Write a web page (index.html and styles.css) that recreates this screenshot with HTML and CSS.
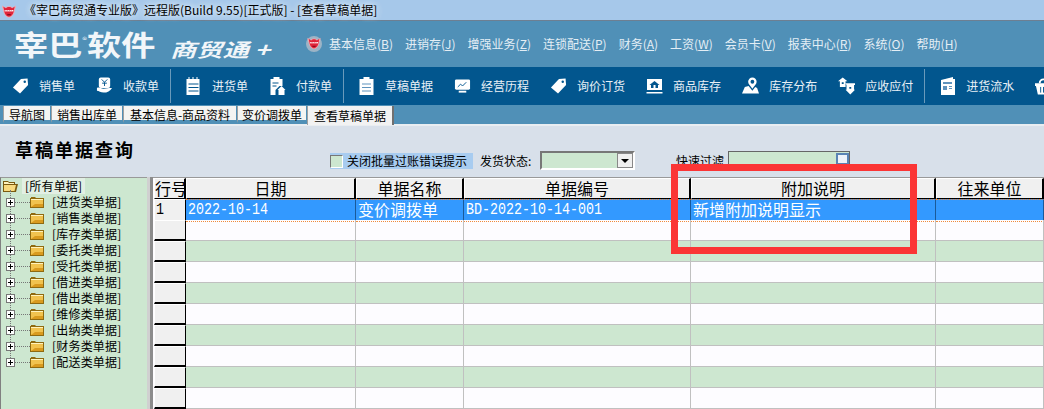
FILE: index.html
```html
<!DOCTYPE html>
<html lang="zh-CN">
<head>
<meta charset="utf-8">
<title>查看草稿单据</title>
<link rel="stylesheet" href="styles.css">
</head>
<body>
<svg class="defs" width="0" height="0" aria-hidden="true">
  <symbol id="bull" viewBox="0 0 16 16">
    <path fill="#f2a6ae" d="M0 2c1 1 2 2 4 2.500C5 3.500 6.500 3 8 3s3 .5 4 1.500C14 4 15 3 16 2c0 3-1 5-1.500 6.500C14 12 11 16 8 16s-6-4-6.500-7.500C1 7 0 5 0 2z"/>
    <path fill="#e0243a" d="M1.500 3.500C2.500 4.500 3.500 5 4.500 5.500 5.500 4.500 6.500 4 8 4s2.500.5 3.500 1.500c1-.5 2-1 3-2-.2 2-.8 3.500-1 5C13 12 10.500 15 8 15s-5-3-5.500-6.500c-.2-1.500-.8-3-1-5z"/>
    <path fill="#fff" d="M3 7.500h10v1.500H3z"/><path fill="#e0243a" d="M4 8h1v.6H4zM6 8h1v.6H6zM8 8h1v.6H8zM10 8h1v.6h-1z"/>
    <path fill="#8c1020" d="M6 12h4v1.500H6z"/>
  </symbol>
  <symbol id="tag" viewBox="0 0 18 18">
    <path fill="#fff" d="M9.500 1.500L16.500 1l.500 7-8.500 9L1 10.500z"/><circle cx="13.500" cy="4.500" r="1.300" fill="#02568e"/>
  </symbol>
  <symbol id="hand" viewBox="0 0 18 18">
    <rect x="3" y="0" width="12" height="11" rx="2" fill="#fff"/><path d="M6 2l3 3 3-3M9 5v4M6.500 6h5" stroke="#02568e" fill="none"/>
    <path fill="#fff" d="M1 11c3-1 4 1 7 1l6-1c1 0 2 0 3 0-2 3-5 5-9 5-3 0-5-2-7-2z"/>
  </symbol>
  <symbol id="list" viewBox="0 0 16 18">
    <path fill="#fff" d="M1 2h2V0h1v2h3V0h1v2h3V0h1v2h2v16H1z"/><path stroke="#02568e" d="M3 7h10M3 10.500h10M3 14h10"/>
  </symbol>
  <symbol id="pay" viewBox="0 0 16 18">
    <path fill="#fff" d="M1 2h3V0h6v2h3v7h-3l-4 4v5H1z"/><path stroke="#02568e" d="M3 6h6M3 9h4"/><path fill="#fff" d="M12 9l4 4h-1v5H9v-5H8z"/>
  </symbol>
  <symbol id="clip" viewBox="0 0 16 18">
    <path fill="#fff" d="M1 2h4V0h6v2h4v16H1z"/><path stroke="#5f93bd" d="M3.500 7h9M3.500 10.500h9M3.500 14h9"/>
  </symbol>
  <symbol id="chart" viewBox="0 0 18 18">
    <rect x="1" y="2" width="16" height="11" rx="1.500" fill="#fff"/><path d="M4 10l3-3 2 2 4-4" stroke="#02568e" fill="none"/><path fill="#fff" d="M5 14h8v2H5z"/>
  </symbol>
  <symbol id="store" viewBox="0 0 16 18">
    <rect x="0.500" y="2" width="15" height="11" fill="#fff"/><path fill="#02568e" d="M8 4l5 4h-1.500v3h-7V8H3z"/><path fill="#fff" d="M7 8h2v3H7z"/><path fill="#fff" d="M0 15h16v1.500H0z"/>
  </symbol>
  <symbol id="map" viewBox="0 0 18 18">
    <path fill="#fff" d="M11 0a4.500 4.500 0 0 1 4.500 4.500C15.500 7 13 9 11 12 9 9 6.500 7 6.500 4.500A4.500 4.500 0 0 1 11 0z"/><circle cx="11" cy="4.500" r="2" fill="#02568e"/><path fill="#fff" d="M3 10l4-1 4 5 3-4 2 1 2 6H0z"/>
  </symbol>
  <symbol id="swap" viewBox="0 0 18 18">
    <path fill="#fff" d="M5 0l5 4H8v6H2V4H0zM8 6h10v2h-1v5h1l-5 5-5-5h1V8z"/><path fill="#02568e" d="M4 5h2v2H4zM12 10h2v2h-2z"/>
  </symbol>
  <symbol id="flow" viewBox="0 0 15 18">
    <path fill="#fff" d="M1 3l12-3v2h2v16H1z"/><path fill="#5f93bd" d="M3 5h9v2H3zM3 9h4v4H3zM9 9h3v1H9zM9 11h3v1H9z"/>
  </symbol>
  <symbol id="cart" viewBox="0 0 18 18">
    <path d="M5 6a4 4 0 0 1 8 0" stroke="#fff" stroke-width="2" fill="none"/><path fill="#fff" d="M0 6h18v3h-1l-2 9H3L1 9H0z"/><path stroke="#02568e" d="M6 10v6M9 10v6M12 10v6"/>
  </symbol>
  <symbol id="folder" viewBox="0 0 14 12">
    <path fill="#8f6a10" d="M0 2h1V1h4l1 1h8v10H0z"/><path fill="#fff3bd" d="M1 3h12v1H1z"/><path fill="#f1c34f" d="M1 4h12v7H1z"/><path fill="#d99b1f" d="M5 8h8v3H1z"/>
  </symbol>
  <symbol id="folder-open" viewBox="0 0 15 12">
    <path fill="#7a5a10" d="M0 1h5l1 1h6v2h3l-2 8H0z"/><path fill="#f8da7e" d="M1 5h12l-1.500 6H1z"/><path fill="#fff3bd" d="M1 2h4l1 1h5v1H1z"/>
  </symbol>
</svg>

<header class="titlebar">
  <svg class="title-icon"><use href="#bull"/></svg>
  <span class="title-text">《宰巴商贸通专业版》远程版(Build 9.55)[正式版] - [查看草稿单据]</span>
</header>

<section class="brandbar">
  <div class="logo"><span class="logo-main">宰巴<sup>®</sup>软件</span><span class="logo-sub">商贸通 +</span></div>
  <span class="menu-badge"><svg class="menu-icon"><use href="#bull"/></svg></span>
  <nav class="menu">
    <span>基本信息(<u>B</u>)</span><span>进销存(<u>J</u>)</span><span>增强业务(<u>Z</u>)</span><span>连锁配送(<u>P</u>)</span><span>财务(<u>A</u>)</span><span>工资(<u>W</u>)</span><span>会员卡(<u>V</u>)</span><span>报表中心(<u>R</u>)</span><span>系统(<u>O</u>)</span><span>帮助(<u>H</u>)</span>
  </nav>
</section>

<nav class="toolbar">
  <div class="tool"><svg class="ti"><use href="#tag"/></svg><span>销售单</span></div>
  <div class="tool"><svg class="ti"><use href="#hand"/></svg><span>收款单</span></div>
  <i class="sep"></i>
  <div class="tool"><svg class="ti"><use href="#list"/></svg><span>进货单</span></div>
  <div class="tool"><svg class="ti"><use href="#pay"/></svg><span>付款单</span></div>
  <i class="sep"></i>
  <div class="tool"><svg class="ti"><use href="#clip"/></svg><span>草稿单据</span></div>
  <div class="tool"><svg class="ti"><use href="#chart"/></svg><span>经营历程</span></div>
  <div class="tool"><svg class="ti"><use href="#tag"/></svg><span>询价订货</span></div>
  <div class="tool"><svg class="ti"><use href="#store"/></svg><span>商品库存</span></div>
  <div class="tool"><svg class="ti"><use href="#map"/></svg><span>库存分布</span></div>
  <div class="tool"><svg class="ti"><use href="#swap"/></svg><span>应收应付</span></div>
  <i class="sep"></i>
  <div class="tool"><svg class="ti"><use href="#flow"/></svg><span>进货流水</span></div>
  <div class="tool"><svg class="ti"><use href="#cart"/></svg></div>
</nav>

<div class="tabs">
  <span class="tab w1">导航图</span><span class="tab w2">销售出库单</span><span class="tab w3">基本信息-商品资料</span><span class="tab w4">变价调拨单</span><span class="tab active">查看草稿单据</span>
</div>

<main class="page">
  <div class="query">
    <h1>草稿单据查询</h1>
    <label class="check"><i class="box"></i>关闭批量过账错误提示</label>
    <span class="lbl">发货状态:</span>
    <span class="select"><b class="drop"></b></span>
    <span class="lbl lbl-filter">快速过滤</span>
    <span class="filter"><b class="filter-btn"></b></span>
  </div>
  <div class="body">
    <aside class="tree">
      <div class="node root"><svg class="fo"><use href="#folder-open"/></svg><span class="root-label">[所有单据]</span></div>
      <div class="node"><i class="plus"></i><i class="dots"></i><svg class="fc"><use href="#folder"/></svg><span>[进货类单据]</span></div>
      <div class="node"><i class="plus"></i><i class="dots"></i><svg class="fc"><use href="#folder"/></svg><span>[销售类单据]</span></div>
      <div class="node"><i class="plus"></i><i class="dots"></i><svg class="fc"><use href="#folder"/></svg><span>[库存类单据]</span></div>
      <div class="node"><i class="plus"></i><i class="dots"></i><svg class="fc"><use href="#folder"/></svg><span>[委托类单据]</span></div>
      <div class="node"><i class="plus"></i><i class="dots"></i><svg class="fc"><use href="#folder"/></svg><span>[受托类单据]</span></div>
      <div class="node"><i class="plus"></i><i class="dots"></i><svg class="fc"><use href="#folder"/></svg><span>[借进类单据]</span></div>
      <div class="node"><i class="plus"></i><i class="dots"></i><svg class="fc"><use href="#folder"/></svg><span>[借出类单据]</span></div>
      <div class="node"><i class="plus"></i><i class="dots"></i><svg class="fc"><use href="#folder"/></svg><span>[维修类单据]</span></div>
      <div class="node"><i class="plus"></i><i class="dots"></i><svg class="fc"><use href="#folder"/></svg><span>[出纳类单据]</span></div>
      <div class="node"><i class="plus"></i><i class="dots"></i><svg class="fc"><use href="#folder"/></svg><span>[财务类单据]</span></div>
      <div class="node"><i class="plus"></i><i class="dots"></i><svg class="fc"><use href="#folder"/></svg><span>[配送类单据]</span></div>
    </aside>
    <div class="splitter"></div>
    <section class="grid">
      <div class="row head"><div>行号</div><div>日期</div><div>单据名称</div><div>单据编号</div><div>附加说明</div><div>往来单位</div></div>
      <div class="row sel"><div class="num"><span>1</span></div><div class="num"><span>2022-10-14</span></div><div>变价调拨单</div><div class="num"><span>BD-2022-10-14-001</span></div><div>新增附加说明显示</div><div></div></div>
      <div class="row"><div></div><div></div><div></div><div></div><div></div><div></div></div>
      <div class="row alt"><div></div><div></div><div></div><div></div><div></div><div></div></div>
      <div class="row"><div></div><div></div><div></div><div></div><div></div><div></div></div>
      <div class="row alt"><div></div><div></div><div></div><div></div><div></div><div></div></div>
      <div class="row"><div></div><div></div><div></div><div></div><div></div><div></div></div>
      <div class="row alt"><div></div><div></div><div></div><div></div><div></div><div></div></div>
      <div class="row"><div></div><div></div><div></div><div></div><div></div><div></div></div>
      <div class="row alt"><div></div><div></div><div></div><div></div><div></div><div></div></div>
      <div class="row"><div></div><div></div><div></div><div></div><div></div><div></div></div>
    </section>
  </div>
  <div class="annotation"></div>
</main>
</body>
</html>
```

FILE: styles.css
```css
* { box-sizing: border-box; }
html, body { margin: 0; height: 409px; overflow: hidden; }
body { width: 1044px; font: 12px/16px "Noto Sans CJK SC", "Noto Sans", sans-serif; color: #000; background: #d8e0ea; }
.defs { position: absolute; }
u { text-decoration: underline; }
i, b { display: block; }

.titlebar { height: 21px; display: flex; align-items: center; background: #a6c8ea; border-bottom: 1px solid #6d7f92; padding-left: 2px; }
.title-icon { width: 14px; height: 15px; }
.title-text { margin-left: 8px; white-space: nowrap; text-shadow: 0 0 6px #e6f0fa, 0 0 6px #e6f0fa; }

.brandbar { height: 46px; display: flex; align-items: center; background: #5090b7; color: #e4eef5; padding-left: 14px; }
.logo { width: 292px; display: flex; align-items: center; color: #f2f6f9; white-space: nowrap; }
.logo-main { font-size: 28px; line-height: 36px; font-weight: 700; width: 156px; flex: none; display: block; transform: scaleX(1.22); transform-origin: left center; }
.logo-main sup { font-size: 8px; font-weight: 400; line-height: 0; vertical-align: 13px; }
.logo-sub { font-size: 19px; line-height: 24px; font-style: italic; font-weight: 700; margin-top: 9px; flex: none; transform: scaleX(1.38); transform-origin: left center; }
.menu-badge { width: 16px; height: 16px; border-radius: 50%; background: #9cb4c6; display: flex; align-items: flex-start; justify-content: center; margin-right: 7px; }
.menu-icon { width: 14px; height: 13px; }
.menu { display: flex; gap: 12px; white-space: nowrap; }

.toolbar { height: 38px; display: flex; align-items: center; gap: 21px; background: #02568e; color: #e8f0f6; padding-left: 12px; overflow: hidden; white-space: nowrap; }
.tool { display: flex; align-items: center; gap: 10px; }
.ti { width: 17px; height: 18px; flex: none; }
.sep { width: 1px; height: 34px; background: #6a9abb; margin: 0 -7px 0 -10px; flex: none; }

.tabs { height: 21px; display: flex; align-items: flex-end; gap: 1px; background: #5090b7; padding: 0 0 1px 3px; border-bottom: 2px solid #e9edf1; }
.tab { height: 17px; line-height: 18px; text-align: center; background: #f4f4f2; border-bottom: 3px solid #5090b7; border-left: 1px solid #a0a0a0; white-space: nowrap; }
.w1 { width: 47px; }
.w2 { width: 71px; }
.w3 { width: 113px; }
.w4 { width: 69px; }
.active { width: 87px; height: 19px; line-height: 19px; background: #f2f2f2; margin-bottom: -2px; border-bottom: 0; border-right: 2px solid #707070; }

.page { position: relative; height: 284px; }
.query { height: 51px; display: flex; align-items: flex-start; position: relative; }
h1 { margin: 12px 0 0 15px; width: 315px; font-size: 18px; line-height: 22px; letter-spacing: 2px; font-weight: 700; }
.check { width: 143px; height: 16px; margin-top: 27px; display: flex; align-items: center; gap: 4px; background: #a8ccf0; white-space: nowrap; }
.box { width: 13px; height: 13px; background: #cde7d0; border: 1px solid; border-color: #777 #fff #fff #777; }
.lbl { margin: 27px 0 0 7px; width: 60px; }
.select { width: 95px; height: 19px; margin-top: 25px; background: #cde7d0; border: 2px solid; border-color: #777 #fff #fff #777; display: flex; justify-content: flex-end; }
.drop { width: 16px; height: 15px; background: #f0f0f0; border: 1px solid #888; position: relative; }
.drop::after { content: ""; position: absolute; left: 3px; top: 5px; border: 4px solid transparent; border-top: 4px solid #000; border-bottom: 0; }
.lbl-filter { margin-left: 41px; width: 52px; }
.filter { width: 122px; height: 18px; margin-top: 25px; background: #cde7d0; border: 1px solid #666; display: flex; justify-content: flex-end; }
.filter-btn { width: 13px; height: 12px; margin-top: 1px; background: #eef3fa; border: 2px solid #5a84b4; }

.body { height: 233px; display: flex; }
.tree { width: 147px; background: #cde7d0; border-top: 1px solid #999; border-left: 1px solid #808080; }
.node { height: 16px; display: flex; align-items: center; position: relative; white-space: nowrap; letter-spacing: .2px; }
.root { padding-left: 2px; }
.fo { width: 15px; height: 12px; }
.root-label { margin-left: 4px; padding: 0 3px; background: #e2efe4; }
.plus { width: 9px; height: 9px; margin-left: 5px; border: 1px solid #777; background: #fff linear-gradient(#000, #000) center / 5px 1px no-repeat; position: relative; z-index: 1; }
.plus::after { content: ""; position: absolute; left: 3px; top: 1px; width: 1px; height: 5px; background: #000; }
.dots { width: 15px; border-top: 1px dotted #777; }
.fc { width: 14px; height: 12px; margin-right: 8px; }
.node:not(.root)::before { content: ""; position: absolute; left: 9px; top: -4px; height: 16px; border-left: 1px dotted #777; }
.splitter { width: 6px; background: linear-gradient(90deg, #d0d0d0 50%, #8c8c8c 50%); }

.grid { flex: 1; border-top: 1px solid #999; background: #fdfcff; overflow: hidden; padding-left: 1px; }
.row { display: grid; grid-template-columns: 32px 170px 108px 227px 245px 108px; height: 21px; background: #fdfcff; font-size: 16px; line-height: 18px; }
.row > div { border-right: 1px solid #c0c0c0; border-bottom: 1px solid #c0c0c0; padding-left: 2px; white-space: nowrap; }
.row > div:first-child { background: #f0f0f0; border-right: 1px solid #000; border-bottom: 2px solid #000; border-top: 1px solid #fff; border-left: 1px solid #fff; padding-left: 1px; }
.alt { background: #cde7d0; }
.head > div, .head > div:first-child { background: #f0f0f0; text-align: center; border-right: 2px solid #000; border-bottom: 1px solid #000; border-top: 1px solid #fff; border-left: 1px solid #fff; padding: 0; }
.sel { background: #3399ff; color: #fff; }
.sel > div { border-bottom: 1px dotted #f08a3c; border-top: 1px dotted #f08a3c; border-right-color: #1a5a9a; }
.sel > div:first-child { color: #000; }
.num { font-family: "Liberation Mono", monospace; font-size: 13.340px; line-height: 20px; }
.num span { display: inline-block; transform: scaleY(1.3); }

.annotation { position: absolute; left: 671px; top: 38px; width: 246px; height: 90px; border: 7px solid #fb3535; pointer-events: none; }
```
